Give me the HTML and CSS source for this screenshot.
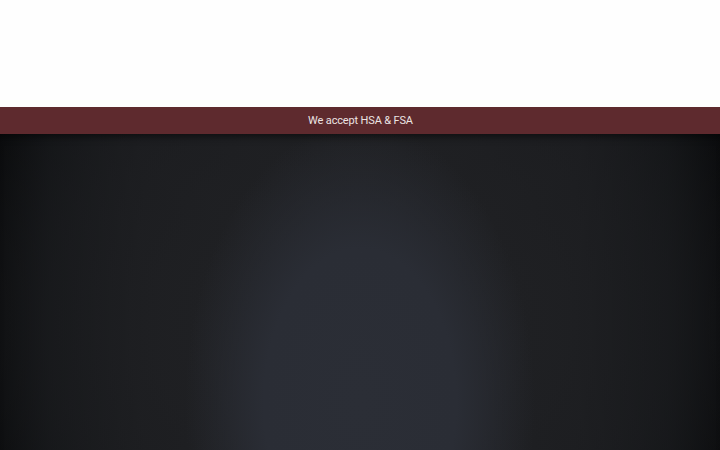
FILE: index.html
```html
<!DOCTYPE html>
<html lang="en">
<head>
<meta charset="utf-8">
<title>HSA & FSA</title>
<link rel="stylesheet" href="styles.css">
</head>
<body>
<header class="top"></header>
<div class="banner"><span class="banner-text">We accept HSA &amp; FSA</span></div>
<section class="hero"></section>
</body>
</html>
```
FILE: styles.css
```css
html, body {
  margin: 0;
  padding: 0;
  height: 100%;
  overflow: hidden;
  background: #fff;
  font-family: Roboto, "Liberation Sans", sans-serif;
}
.top {
  height: 107px;
  background: #fefefe;
}
.banner {
  height: 27px;
  background: #5e2a2e;
  color: #ece4e4;
  display: flex;
  align-items: center;
  justify-content: center;
}
.banner-text {
  font-size: 11px;
  font-weight: 400;
  letter-spacing: -0.15px;
  padding-left: 1px;
}
.hero {
  height: 316px;
  background:
    radial-gradient(ellipse 175px 280px at 50% 85%, #2b2e36 0%, #2a2d35 55%, rgba(42,45,53,0) 100%),
    radial-gradient(ellipse 520px 420px at 50% 60%, rgba(34,35,38,0.9) 0%, rgba(30,31,34,0.6) 60%, rgba(0,0,0,0) 100%),
    linear-gradient(to right, #040506 0%, #0f1113 7%, #1a1b1e 20%, #1f2023 50%, #1a1b1e 80%, #0f1113 93%, #040506 100%);
  box-shadow: inset 0 8px 8px -6px rgba(0,0,0,0.6);
}
```
